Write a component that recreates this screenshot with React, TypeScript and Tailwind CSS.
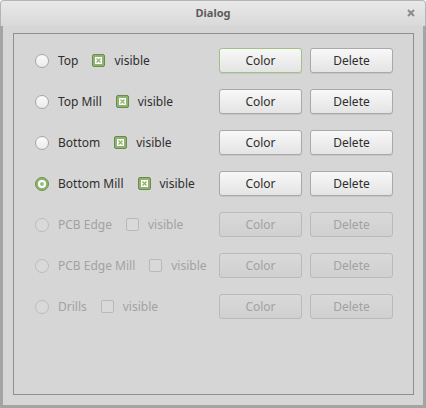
import React from "react";

interface LayerRow {
  name: string;
  visible: boolean;
  selected: boolean;
  enabled: boolean;
}

const rows: LayerRow[] = [
  { name: "Top", visible: true, selected: false, enabled: true },
  { name: "Top Mill", visible: true, selected: false, enabled: true },
  { name: "Bottom", visible: true, selected: false, enabled: true },
  { name: "Bottom Mill", visible: true, selected: true, enabled: true },
  { name: "PCB Edge", visible: false, selected: false, enabled: false },
  { name: "PCB Edge Mill", visible: false, selected: false, enabled: false },
  { name: "Drills", visible: false, selected: false, enabled: false },
];

const Radio: React.FC<{ checked: boolean; enabled: boolean }> = ({ checked, enabled }) => {
  if (checked) {
    return (
      <div className="w-[14px] h-[14px] rounded-full bg-[#8db56c] border border-[#6f9250] flex items-center justify-center shrink-0">
        <div className="w-[8px] h-[8px] rounded-full bg-white flex items-center justify-center">
          <div className="w-[4px] h-[4px] rounded-full bg-[#9cc07c]" />
        </div>
      </div>
    );
  }
  return (
    <div
      className={`w-[14px] h-[14px] rounded-full shrink-0 border ${
        enabled
          ? "border-[#a6a6a6] bg-gradient-to-b from-[#fbfbfb] to-[#ebebeb]"
          : "border-[#bcbcbc] bg-[#d9d9d9]"
      }`}
    />
  );
};

const Checkbox: React.FC<{ checked: boolean; enabled: boolean }> = ({ checked, enabled }) => {
  if (checked) {
    return (
      <div className="w-[13px] h-[13px] rounded-[2px] bg-[#8fb36f] border border-[#6a8a4e] flex items-center justify-center shrink-0">
        <svg width="7" height="7" viewBox="0 0 7 7">
          <rect x="0" y="0" width="7" height="7" fill="#ffffff" />
          <path d="M1.5 1.5 L5.5 5.5 M5.5 1.5 L1.5 5.5" stroke="#8fb36f" strokeWidth="1.4" />
        </svg>
      </div>
    );
  }
  return (
    <div
      className={`w-[13px] h-[13px] rounded-[2px] shrink-0 border ${
        enabled ? "border-[#a6a6a6] bg-[#f4f4f4]" : "border-[#b9b9b9] bg-[#d9d9d9]"
      }`}
    />
  );
};

const Button: React.FC<{ label: string; enabled: boolean; focused?: boolean }> = ({
  label,
  enabled,
  focused,
}) => (
  <div
    className={`w-[83px] h-[25px] rounded-[3px] border flex items-center justify-center text-[12px] ${
      enabled
        ? `bg-gradient-to-b from-[#f8f8f8] to-[#e4e4e4] text-[#2e2e2e] shadow-[0_1px_0_rgba(0,0,0,0.08)] ${
            focused ? "border-[#a3c185]" : "border-[#a9a9a9]"
          }`
        : "bg-gradient-to-b from-[#d9d9d9] to-[#d0d0d0] border-[#bababa] text-[#a2a2a2]"
    }`}
  >
    {label}
  </div>
);

export default function App() {
  return (
    <div
      className="w-[426px] h-[408px] flex flex-col bg-[#d6d6d6] rounded-t-[4px] overflow-hidden"
      style={{ fontFamily: '"Noto Sans", "Open Sans", sans-serif' }}
    >
      {/* Title bar */}
      <div className="h-[26px] shrink-0 relative flex items-center justify-center bg-gradient-to-b from-[#e9e9e9] to-[#d9d9d9] border border-b-0 border-[#b4b4b4] rounded-t-[4px]">
        <span className="text-[11px] font-bold text-[#5c5c5c]">Dialog</span>
        <svg
          className="absolute right-[10px] top-[8px]"
          width="8"
          height="8"
          viewBox="0 0 8 8"
        >
          <path d="M1 1 L7 7 M7 1 L1 7" stroke="#8c8c8c" strokeWidth="2" />
        </svg>
      </div>

      {/* Body */}
      <div className="flex-1 flex flex-col border-x-[3px] border-b-[3px] border-[#a4a4a4] pl-[10px] pr-[9px] pt-[7px] pb-[10px]">
        <div className="flex-1 border border-[#8f8f8f] pt-[14px] pl-[21px] pr-[20px] flex flex-col gap-[16px]">
          {rows.map((row, i) => {
            const textColor = row.enabled ? "text-[#2e2e2e]" : "text-[#a2a2a2]";
            return (
              <div key={row.name} className="h-[25px] flex items-center">
                <Radio checked={row.selected} enabled={row.enabled} />
                <span className={`ml-[9px] text-[12px] ${textColor}`}>{row.name}</span>
                <div className="ml-[14px]">
                  <Checkbox checked={row.visible} enabled={row.enabled} />
                </div>
                <span className={`ml-[9px] text-[12px] ${textColor}`}>visible</span>
                <div className="ml-auto flex gap-[8px]">
                  <Button label="Color" enabled={row.enabled} focused={i === 0} />
                  <Button label="Delete" enabled={row.enabled} />
                </div>
              </div>
            );
          })}
        </div>
      </div>
    </div>
  );
}
